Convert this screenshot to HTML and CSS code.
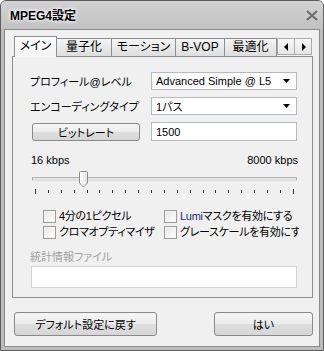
FILE: index.html
```html
<!DOCTYPE html>
<html lang="ja">
<head>
    <meta charset="UTF-8">
    <title>MPEG4設定</title>
    <link rel="stylesheet" href="styles.css">
</head>
<body>
    <div class="window">
        <div class="titlebar">
            <span class="title">MPEG4設定</span>
            <svg class="close" width="12" height="11" viewBox="0 0 12 11">
                <path d="M1 1 L11 10 M11 1 L1 10" stroke="#6b6b6b" stroke-width="2" fill="none"/>
            </svg>
        </div>
        <div class="client">
            <div class="tabs">
                <div class="tab active" style="width: 43px">メイン</div>
                <div class="tab" style="width: 55px">量子化</div>
                <div class="tab" style="width: 64px">モーション</div>
                <div class="tab" style="width: 49px">B-VOP</div>
                <div class="tab" style="width: 52px">最適化</div>
                <div class="tab-arrow">
                    <svg width="5" height="8" viewBox="0 0 5 8"><path d="M4 0 V8 L0 4 Z" fill="#000"/></svg>
                </div>
                <div class="tab-arrow">
                    <svg width="5" height="8" viewBox="0 0 5 8"><path d="M1 0 V8 L5 4 Z" fill="#000"/></svg>
                </div>
            </div>
            <div class="panel">
                <div class="form-grid">
                    <div class="label">プロフィール@レベル</div>
                    <div class="select">
                        <span>Advanced Simple @ L5</span>
                        <svg width="7" height="4" viewBox="0 0 7 4"><path d="M0 0 H7 L3.5 4 Z" fill="#000"/></svg>
                    </div>
                    <div class="label">エンコーディングタイプ</div>
                    <div class="select">
                        <span>1パス</span>
                        <svg width="7" height="4" viewBox="0 0 7 4"><path d="M0 0 H7 L3.5 4 Z" fill="#000"/></svg>
                    </div>
                    <div><button class="btn btn-bitrate">ビットレート</button></div>
                    <div class="textbox">1500</div>
                </div>

                <div class="slider-labels">
                    <span>16 kbps</span>
                    <span>8000 kbps</span>
                </div>
                <div class="slider">
                    <div class="track"></div>
                    <svg class="thumb" width="10" height="17" viewBox="0 0 10 17">
                        <defs>
                            <linearGradient id="tg" x1="0" y1="0" x2="1" y2="0">
                                <stop offset="0" stop-color="#ffffff"/>
                                <stop offset="1" stop-color="#e2e2e2"/>
                            </linearGradient>
                        </defs>
                        <path d="M0.5 1.5 Q0.5 0.5 1.5 0.5 H7.5 Q8.5 0.5 8.5 1.5 V12 L4.5 16 L0.5 12 Z" fill="url(#tg)" stroke="#8c8c8c"/>
                    </svg>
                </div>
                <div class="ticks" id="ticks"></div>

                <div class="checks">
                    <label class="check"><span class="box"></span>4分の1ピクセル</label>
                    <label class="check"><span class="box"></span><span><span class="lumi">Lumi</span>マスクを有効にする</span></label>
                    <label class="check"><span class="box"></span>クロマオプティマイザ</label>
                    <label class="check"><span class="box"></span>グレースケールを有効にす</label>
                </div>

                <div class="stats-label">統計情報ファイル</div>
                <div class="stats-input"></div>
            </div>
            <div class="footer">
                <button class="btn btn-default">デフォルト設定に戻す</button>
                <button class="btn btn-ok">はい</button>
            </div>
        </div>
    </div>
    <script>
    var ticks = document.getElementById('ticks');
    for (var i = 0; i < 21; i++) {
        var t = document.createElement('span');
        t.className = (i === 0 || i === 20) ? 'tick end' : 'tick';
        ticks.appendChild(t);
    }
    </script>
</body>
</html>
```

FILE: styles.css
```css
body {
    margin: 0;
    background-color: #ffffff;
    font-family: "Liberation Sans", "Noto Sans CJK JP", sans-serif;
    font-size: 11px;
    font-feature-settings: "palt";
    color: #000;
}

.window {
    width: 324px;
    height: 351px;
    box-sizing: border-box;
    border: 1px solid #5e5e5e;
    border-radius: 6px 6px 0 0;
    background-color: #bcbcbc;
    padding: 0 3px 3px 3px;
    display: flex;
    flex-direction: column;
}

.titlebar {
    height: 26px;
    display: flex;
    align-items: center;
    justify-content: space-between;
    padding: 0 5px 2px 6px;
    background: linear-gradient(#d2d2d2, #c2c2c2);
    margin: 0 -3px;
    border-radius: 5px 5px 0 0;
}

    .titlebar .title {
        font-weight: bold;
        font-size: 12px;
        padding-left: 3px;
        text-shadow: 0 0 3px #ffffff, 0 0 5px #ffffff;
    }

    .titlebar .close {
        margin-top: 2px;
    }

.client {
    flex: 1;
    border: 1px solid #8a8a8a;
    background-color: #f0f0f0;
    padding: 6px 6px 0 7px;
}

.tabs {
    height: 20px;
    display: flex;
    align-items: flex-end;
    padding-left: 2px;
    font-size: 12px;
}

    .tabs .tab {
        box-sizing: border-box;
        height: 18px;
        border: 1px solid #8c8e94;
        border-bottom: none;
        border-left: none;
        background: linear-gradient(#f4f4f4, #dedede);
        text-align: center;
        line-height: 17px;
        white-space: nowrap;
        overflow: hidden;
    }

    .tabs .tab.active {
        height: 21px;
        margin-bottom: -1px;
        border-left: 1px solid #8c8e94;
        background: linear-gradient(#ffffff, #f3f3f3);
        line-height: 19px;
        position: relative;
        z-index: 1;
    }

    .tabs .tab-arrow {
        box-sizing: border-box;
        width: 18px;
        height: 17px;
        margin-bottom: 1px;
        border: 1px solid #acacac;
        background: linear-gradient(#f7f7f7, #e6e6e6);
        display: flex;
        align-items: center;
        justify-content: center;
    }

        .tabs .tab-arrow + .tab-arrow {
            width: 17px;
            border-left: none;
        }

.panel {
    border: 1px solid #8c8e94;
    background-color: #f0f0f0;
    padding: 15px 15px 9px 17px;
}

.form-grid {
    display: grid;
    grid-template-columns: 121px 146px;
    grid-template-rows: 18px 18px 19px;
    row-gap: 7px;
    align-items: center;
}

    .form-grid .label {
        white-space: nowrap;
    }

.select, .textbox {
    box-sizing: border-box;
    height: 18px;
    border: 1px solid #b5b9c0;
    background-color: #ffffff;
    display: flex;
    align-items: center;
    justify-content: space-between;
    padding: 0 6px 0 4px;
}

.textbox {
    height: 19px;
}

.btn {
    font-family: "Liberation Sans", "Noto Sans CJK JP", sans-serif;
    font-size: 11px;
    font-feature-settings: "palt";
    color: #000;
    box-sizing: border-box;
    border: 1px solid #8a8a8a;
    border-radius: 3px;
    background: linear-gradient(#f6f6f6 0%, #ececec 48%, #dedede 52%, #d6d6d6 100%);
    padding: 0;
    cursor: pointer;
}

.btn-bitrate {
    width: 108px;
    height: 18px;
    margin-left: 2px;
    display: block;
}

.slider-labels {
    margin-top: 12px;
    height: 14px;
    line-height: 14px;
    display: flex;
    justify-content: space-between;
    padding-left: 1px;
    margin-right: -1px;
}

.slider {
    position: relative;
    margin-top: 4px;
    height: 17px;
    margin-left: 2px;
}

    .slider .track {
        position: relative;
        top: 6px;
        height: 2px;
        border: 1px solid #b3b3b3;
        border-bottom-color: #dcdcdc;
        background-color: #e4e4e4;
        border-radius: 1px;
    }

    .slider .thumb {
        position: absolute;
        left: 47px;
        top: 0;
    }

.ticks {
    height: 6px;
    display: flex;
    align-items: center;
    justify-content: space-between;
    padding: 0 3px 0 5px;
}

    .ticks .tick {
        width: 1px;
        height: 3px;
        background-color: #333;
    }

        .ticks .tick.end {
            height: 5px;
        }

.checks {
    margin-top: 16px;
    display: grid;
    grid-template-columns: 121px 135px;
    grid-template-rows: 13px 13px;
    row-gap: 3px;
    padding-left: 13px;
    letter-spacing: -0.3px;
}

    .checks .check {
        display: flex;
        align-items: center;
        white-space: nowrap;
        overflow: hidden;
        line-height: 13px;
    }

    .checks .box {
        box-sizing: border-box;
        flex: none;
        width: 13px;
        height: 13px;
        border: 1px solid #9b9b9b;
        background: linear-gradient(135deg, #e6e6e6, #ffffff);
        box-shadow: inset 0 0 0 1px #f4f4f4;
        margin-right: 3px;
    }

    .checks .lumi {
        color: #1b2f78;
    }

.stats-label {
    margin-top: 11px;
    height: 14px;
    line-height: 14px;
    color: #a2a2a2;
}

.stats-input {
    margin-top: 2px;
    margin-left: 1px;
    height: 22px;
    box-sizing: border-box;
    border: 1px solid #d0d3d8;
    background-color: #ffffff;
}

.footer {
    margin-top: 14px;
    display: flex;
    justify-content: space-between;
    padding-left: 2px;
}

    .footer .btn {
        height: 24px;
    }

    .footer .btn-default {
        width: 143px;
    }

    .footer .btn-ok {
        width: 99px;
    }
```
